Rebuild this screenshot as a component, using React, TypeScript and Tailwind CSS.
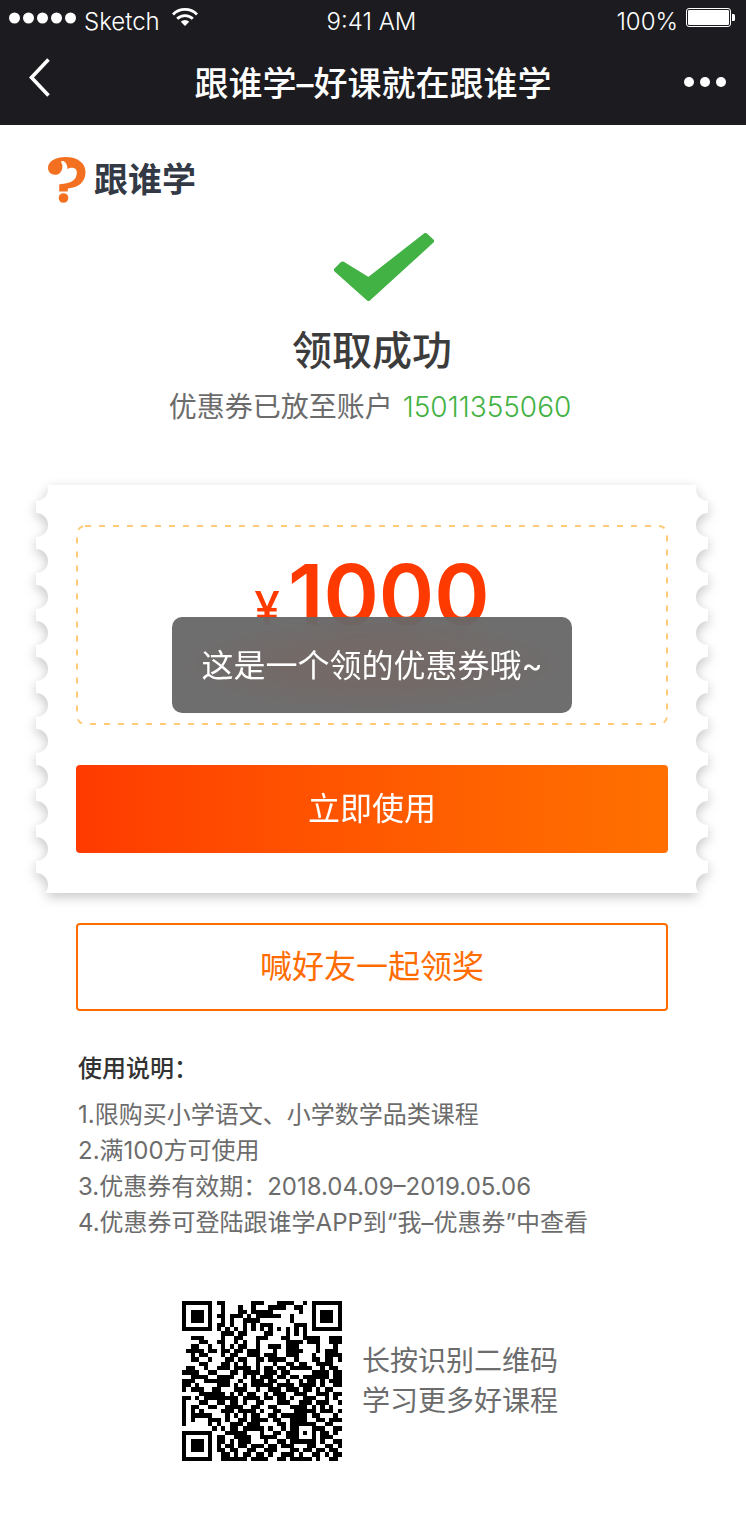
const QR_ROWS = [
  "1111111011000000111000111100101111111",
  "1000001001000100100011110011001000001",
  "1011101001000110111110000001001011101",
  "1011101011011101011111100100001011101",
  "1011101001010011110000000100001011101",
  "1000001011010010101110000011101000001",
  "1111111010101010101010101010101111111",
  "0000000001110110000110001010100000000",
  "0011100001001100011100011000111100111",
  "0000110011001010010000001111011100111",
  "0011001001010110010011101110000100010",
  "0111101101101101110001001111000101110",
  "0010110001011001110111001110001001111",
  "0011001000110110011011110010001101101",
  "0000110001101010010001001101100111100",
  "0110010011101111010110110111110010110",
  "1111001100011011110111011000001111011",
  "0011110011110010101110110110111111011",
  "1110011111100100111011001001011010111",
  "1101000011101010111110111101111010011",
  "1011100110001110010011101110110101100",
  "0000111111010101100101110011100111011",
  "1101011111111011110110110100111001010",
  "1000110011011010011000111001110111001",
  "1011001100111100110011000111101010100",
  "1010100001110111101001100011111011101",
  "1011111000101010110011011111101100010",
  "1010001110100110111101100111100110111",
  "1000001010011101110000110111111001100",
  "0000000101011011111010010110001110011",
  "1111111000111110001001101110101011010",
  "1000001011001111001111001110001011100",
  "1011101011010111000100110111111010011",
  "1011101010110110111011011100011001101",
  "1011101011011001100111000110110110110",
  "1000001001101011011010011101001101011",
  "1111111001111110111100110111110100110",
];

const INSTRUCTIONS = [
  "1.限购买小学语文、小学数学品类课程",
  "2.满100方可使用",
  "3.优惠券有效期：2018.04.09–2019.05.06",
  "4.优惠券可登陆跟谁学APP到“我–优惠券”中查看",
];

function QrCode() {
  const cells: string[] = [];
  QR_ROWS.forEach((row, y) =>
    row.split("").forEach((cell, x) => {
      if (cell === "1") cells.push(`M${x} ${y}h1v1h-1z`);
    }),
  );
  return (
    <svg
      className="size-40 shrink-0"
      viewBox="0 0 37 37"
      shapeRendering="crispEdges"
      role="img"
      aria-label="二维码"
    >
      <path d={cells.join("")} />
    </svg>
  );
}

function StatusBar() {
  return (
    <div className="grid h-10 grid-cols-3 items-center px-2 pr-[11px] pt-1 text-2xl leading-8">
      <div className="flex items-center gap-2">
        <svg className="mb-2 h-3 w-[68px]" viewBox="0 0 68 12" fill="currentColor" aria-hidden="true">
          {[6.5, 20.5, 34.5, 48.5, 62.5].map((x) => (
            <circle key={x} cx={x} cy="6" r="5.5" />
          ))}
        </svg>
        <span className="font-light">Sketch</span>
        <svg className="mb-2.5 ml-1 h-[18px] w-[26px]" viewBox="0 0 26 18" aria-hidden="true">
          <g fill="none" stroke="currentColor" strokeWidth="2.8">
            <path d="M1 6.4a17 17 0 0 1 24 0" />
            <path d="M5.2 10.8a11 11 0 0 1 15.6 0" />
          </g>
          <path d="M13 18l-4.2-4.2a6 6 0 0 1 8.4 0z" fill="currentColor" />
        </svg>
      </div>
      <span className="text-center font-light">9:41 AM</span>
      <div className="flex items-center justify-end gap-2">
        <span className="font-light">100%</span>
        <svg className="mb-2 h-5 w-[49px]" viewBox="0 0 49 20" aria-hidden="true">
          <rect x="0.5" y="0.5" width="44" height="18" rx="2.5" fill="none" stroke="currentColor" />
          <rect x="2" y="2" width="41" height="15" rx="1.2" fill="currentColor" />
          <path d="M46 6h1.5a1.5 1.5 0 0 1 1.5 1.5v4a1.5 1.5 0 0 1-1.5 1.5H46z" fill="currentColor" />
        </svg>
      </div>
    </div>
  );
}

function NavBar() {
  return (
    <div className="flex h-[85px] items-center justify-between pr-5 pl-7">
      <button type="button" aria-label="返回" className="mb-3 w-9">
        <svg className="h-10 w-[22px]" viewBox="0 0 22 40" fill="none" aria-hidden="true">
          <path d="M20.5 2.5L3.5 20.5l17 18" stroke="currentColor" strokeWidth="3.6" />
        </svg>
      </button>
      <h1 className="pt-0.5 text-[34px] leading-10 font-medium">跟谁学–好课就在跟谁学</h1>
      <button type="button" aria-label="更多">
        <svg className="h-3 w-11" viewBox="0 0 44 12" fill="currentColor" aria-hidden="true">
          <circle cx="7" cy="5" r="5" />
          <circle cx="23" cy="5" r="5" />
          <circle cx="39" cy="5" r="5" />
        </svg>
      </button>
    </div>
  );
}

function Logo() {
  return (
    <div className="flex items-center gap-2 px-3">
      <svg className="h-[46px] w-[38px]" viewBox="0 0 38 46" aria-hidden="true">
        <path
          fill="#f37021"
          d="M7 17.8C2.8 17.8 0 14.8 0 10.8C0 4.4 7.6 0 17.5 0C29.5 0 37.5 6 37.5 15C37.5 25 30.5 30.6 20 31.4L19.6 34.4H11.2V27.4C17.5 27 24.5 25.4 27.2 21.6C29.2 18.4 29.6 13.4 27 11.6C25.4 10.4 21.6 10.2 19.6 12.2C19.4 8.8 18.4 5.4 16.2 4.4C14.8 3.8 12.8 4.2 13.2 5.4C14.4 7.4 14.8 8.8 14.2 11.4C13.2 15.4 10.8 17.8 7 17.8Z"
        />
        <circle cx="15.5" cy="41" r="4.8" fill="#f37021" />
      </svg>
      <span className="text-[34px] leading-10 font-bold text-[#333a46]">跟谁学</span>
    </div>
  );
}

function Coupon() {
  return (
    <section className="relative mt-[58px]">
      <div className="drop-shadow-[0_4px_6px_rgba(0,0,0,0.22)]">
        <div className="bg-white p-10 [mask:radial-gradient(circle_at_0_18px,transparent_11.5px,#000_12.5px)_left_-14px/51%_36px_repeat-y,radial-gradient(circle_at_100%_18px,transparent_11.5px,#000_12.5px)_right_-14px/51%_36px_repeat-y]">
          <div className="relative flex h-50 items-baseline justify-center gap-2 pt-4 font-semibold text-[#ff3a00]">
            <svg className="absolute inset-0 size-full p-px" overflow="visible" aria-hidden="true">
              <rect
                width="100%"
                height="100%"
                rx="8"
                fill="none"
                stroke="#ffcb78"
                strokeWidth="2"
                strokeDasharray="6 8"
              />
            </svg>
            <span className="text-[46px] font-medium">¥</span>
            <span className="text-[84px] leading-[108px]">1000</span>
          </div>
          <button
            type="button"
            className="mt-10 h-22 w-full rounded-sm bg-linear-to-r from-[#ff3a00] to-[#ff7000] text-[32px] text-white"
          >
            立即使用
          </button>
        </div>
      </div>
      <div
        role="status"
        className="absolute top-33 left-1/2 flex h-24 w-100 -translate-x-1/2 items-center justify-center rounded-[10px] bg-[#626262]/92 bg-[radial-gradient(closest-side,rgba(150,70,50,0.12)_40%,transparent)] pt-0.5 text-[32px] text-white backdrop-blur-[20px]"
      >
        这是一个领的优惠券哦~
      </div>
    </section>
  );
}

export default function App() {
  return (
    <div className="min-h-screen bg-white font-['Inter','Noto_Sans_CJK_SC',sans-serif] text-[#666]">
      <header className="bg-[#1c1b20] text-white">
        <StatusBar />
        <NavBar />
      </header>
      <main className="pt-8 pr-[38px] pb-14 pl-9">
        <Logo />
        <div className="mt-[30px] flex flex-col items-center">
          <svg className="ml-6 h-[68px] w-[100px]" viewBox="0 0 100 68" aria-hidden="true">
            <path
              d="M2.5 37L8.5 31L34.5 47L91.5 2.5L97.5 8L34.5 65.5Z"
              fill="#43b244"
              stroke="#43b244"
              strokeWidth="5"
              strokeLinejoin="round"
            />
          </svg>
          <h2 className="mt-6 text-[40px] leading-[52px] font-medium text-[#3c3c3c]">领取成功</h2>
          <p className="mt-2.5 flex gap-2.5 pr-1 text-[28px] leading-10 text-[#6c6c6c]">
            <span>优惠券已放至账户</span>
            <span className="font-light text-[#43b244]">15011355060</span>
          </p>
        </div>
        <Coupon />
        <div className="px-10">
          <button
            type="button"
            className="mt-[30px] h-22 w-full rounded-sm border-2 border-[#ff6c00] text-[32px] text-[#ff6c00]"
          >
            喊好友一起领奖
          </button>
        </div>
        <section className="mt-10 px-[42px] text-2xl leading-9">
          <h3 className="font-medium text-[#333]">使用说明：</h3>
          <ul className="mt-2.5 text-[#6c6c6c]">
            {INSTRUCTIONS.map((line) => (
              <li key={line}>{line}</li>
            ))}
          </ul>
        </section>
        <section className="mt-[60px] flex items-center justify-center gap-5 pr-1 text-[28px] leading-10 text-[#6c6c6c]">
          <QrCode />
          <p>
            长按识别二维码
            <br />
            学习更多好课程
          </p>
        </section>
      </main>
    </div>
  );
}
